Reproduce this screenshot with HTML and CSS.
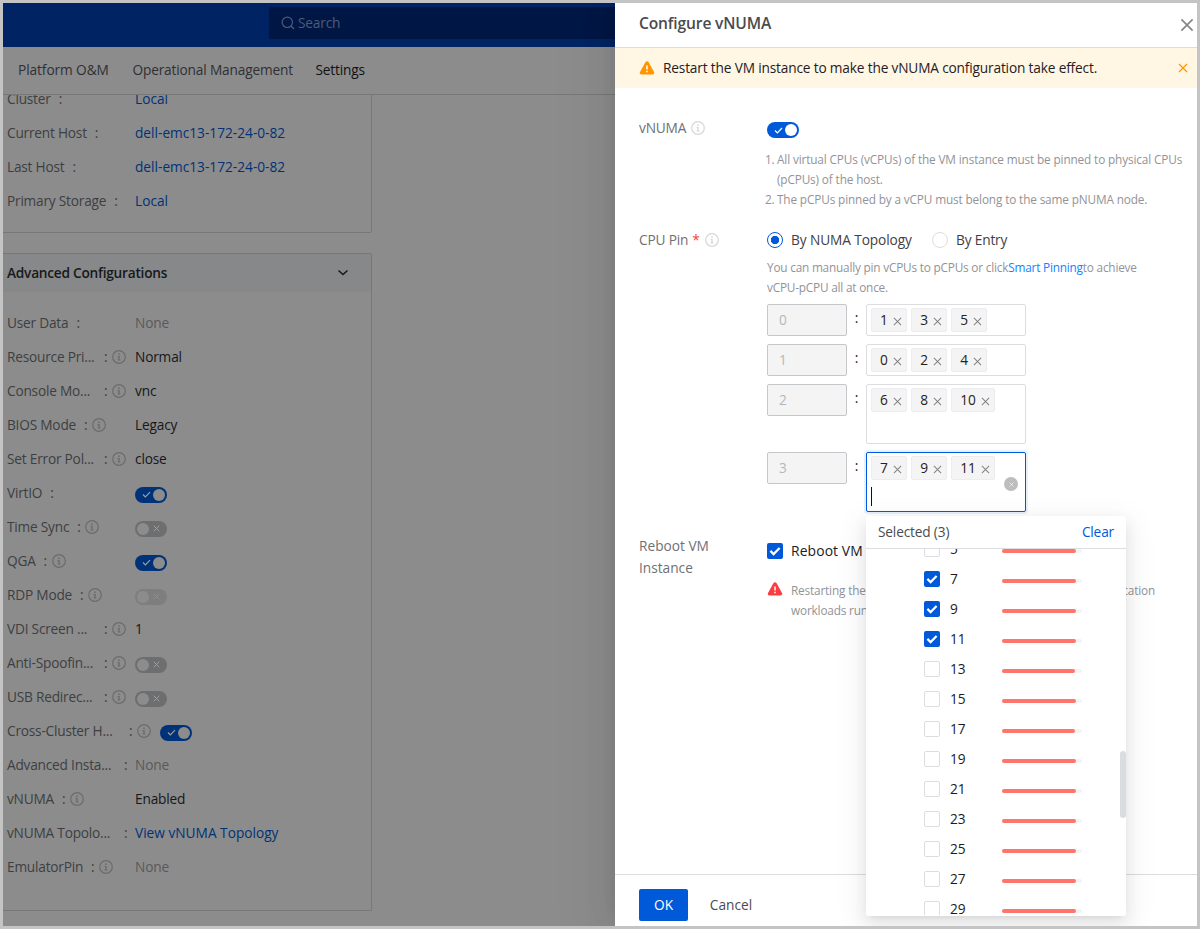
FILE: index.html
```html
<!DOCTYPE html>
<html lang="en">
<head>
<meta charset="utf-8">
<title>Configure vNUMA</title>
<link rel="stylesheet" href="styles.css">
</head>
<body>
<svg width="0" height="0" class="defs">
  <symbol id="info" viewBox="0 0 14 14"><circle cx="7" cy="7" r="6.3" fill="none" stroke="currentColor" stroke-width="1.2"/><path d="M6.2 3.500h1.600v1.500H6.200zM5.500 6h2.200v3.500h.8v1h-3v-1h.8V7h-.8z" fill="currentColor"/></symbol>
  <symbol id="tick" viewBox="0 0 16 16"><path d="M3.400 7.900l3.200 3.200 6-6.200" fill="none" stroke="#fff" stroke-width="2.200"/></symbol>
  <symbol id="cross" viewBox="0 0 10 10"><path d="M1 1l8 8M9 1l-8 8" fill="none" stroke="currentColor" stroke-width="1.200"/></symbol>
  <symbol id="warn" viewBox="0 0 16 14"><path d="M6.500 1.100Q8-.7 9.500 1.100L15 11Q15.900 13.400 13.400 13.600H2.600Q.1 13.400 1 11z" fill="currentColor"/><path d="M8 4.400v4.200M8 9.700v1.600" stroke="#fff" stroke-width="1.500"/></symbol>
</svg>
<div class="frame">
  <main class="page">
    <header class="topbar"><div class="search"><svg class="search-ic" viewBox="0 0 14 14"><circle cx="6.300" cy="6.300" r="5.200" fill="none" stroke="currentColor" stroke-width="1.200"/><path d="M10 10l3 3" stroke="currentColor" stroke-width="1.300"/></svg>Search</div></header>
    <nav class="nav"><span class="n1">Platform O&amp;M</span><span class="n2">Operational Management</span><span class="n3">Settings</span></nav>
    <div class="content">
      <section class="card card-top">
        <div class="row"><span class="lab">Cluster</span><i>:</i><span class="val link">Local</span></div>
        <div class="row"><span class="lab">Current Host</span><i>:</i><span class="val link">dell-emc13-172-24-0-82</span></div>
        <div class="row"><span class="lab">Last Host</span><i>:</i><span class="val link">dell-emc13-172-24-0-82</span></div>
        <div class="row"><span class="lab">Primary Storage</span><i>:</i><span class="val link">Local</span></div>
      </section>
      <section class="card card-adv">
        <h2 class="card-h">Advanced Configurations<svg class="chev" viewBox="0 0 12 8"><path d="M1.500 1.500L6 5.600l4.500-4.100" fill="none" stroke="currentColor" stroke-width="1.500"/></svg></h2>
        <div class="rows" id="rows"></div>
      </section>
    </div>
  </main>
  <aside class="drawer">
    <header class="d-head">Configure vNUMA<svg class="close"><use href="#cross"/></svg></header>
    <div class="banner"><svg class="warn"><use href="#warn"/></svg><span>Restart the VM instance to make the vNUMA configuration take effect.</span><svg class="b-close"><use href="#cross"/></svg></div>
    <div class="form">
      <div class="field f-numa">
        <div class="f-lab">vNUMA<svg class="info"><use href="#info"/></svg></div>
        <div class="f-body">
          <span class="sw on live"><svg class="sw-ic" viewBox="0 0 10 8"><path d="M1 4l2.700 2.700L9 1.200" fill="none" stroke="currentColor" stroke-width="1.400"/></svg></span>
          <ol class="notes"><li><b>1.</b><span>All virtual CPUs (vCPUs) of the VM instance must be pinned to physical CPUs<br>(pCPUs) of the host.</span></li><li><b>2.</b><span>The pCPUs pinned by a vCPU must belong to the same pNUMA node.</span></li></ol>
        </div>
      </div>
      <div class="field f-pin">
        <div class="f-lab">CPU Pin<em>*</em><svg class="info"><use href="#info"/></svg></div>
        <div class="f-body">
          <div class="radios"><span class="radio sel"></span><span class="r1">By NUMA Topology</span><span class="radio"></span><span>By Entry</span></div>
          <p class="help">You can manually pin vCPUs to pCPUs or click<a>Smart Pinning</a>to achieve<br>vCPU-pCPU all at once.</p>
          <div class="pins" id="pins"></div>
        </div>
      </div>
      <div class="field f-reboot">
        <div class="f-lab">Reboot VM<br>Instance</div>
        <div class="f-body">
          <div class="rb"><span class="cb on"><svg><use href="#tick"/></svg></span>Reboot VM Instance</div>
          <div class="rb-note"><svg class="danger"><use href="#warn"/></svg><div><p class="spread"><span>Restarting the</span><span>VM instance may interrupt the application</span></p><p>workloads running on it.</p></div></div>
        </div>
      </div>
    </div>
    <footer class="d-foot"><button class="ok">OK</button><button class="cancel">Cancel</button></footer>
    <div class="dropdown">
      <div class="dd-head"><span>Selected (3)</span><a>Clear</a></div>
      <div class="dd-list" id="opts"></div>
      <span class="thumb"></span>
    </div>
  </aside>
</div>
<script src="app.js"></script>
</body>
</html>
```
FILE: styles.css
```css
* { box-sizing: border-box; }
body { margin: 0; width: 1200px; height: 929px; overflow: hidden; font-family: "Open Sans", "Noto Sans", sans-serif; font-size: 13.700px; letter-spacing: -.17px; line-height: 20px; color: #222; }
p, ol, h2 { margin: 0; padding: 0; }
svg { display: block; flex: none; }
.defs { position: absolute; }
.frame { width: 1200px; height: 929px; border: 3px solid #c4c4c4; display: flex; overflow: hidden; background: #8c8c8c; }
.page { width: 612px; flex: none; height: 923px; display: flex; flex-direction: column; }
.topbar { height: 44px; flex: none; background: #002463; padding: 4px 0 0 266px; }
.search { height: 32px; background: #001745; border-radius: 2px 0 0 2px; display: flex; align-items: center; padding-left: 12px; gap: 3px; color: #4d5b7a; }
.search-ic { width: 14px; height: 14px; }
.nav { height: 48px; flex: none; border-bottom: 1px solid #777; display: flex; align-items: center; padding: 0 0 2px 15px; color: #2f3033; }
.n1 { width: 114.500px; letter-spacing: -.08px; }
.n2 { width: 183px; }
.n3 { color: #111; }
.content { flex: 1; overflow: hidden; }
.card { width: 369px; border: 1px solid #777; border-left: 0; border-radius: 0 2px 2px 0; }
.card-top { margin-top: -14px; height: 152px; }
.card-adv { margin-top: 20px; height: 658px; }
.card-h { height: 38px; background: #86888a; display: flex; align-items: center; justify-content: space-between; padding: 0 22px 0 4px; font-size: 13.700px; font-weight: 600; letter-spacing: -.25px; color: #17181a; }
.chev { width: 12px; height: 8px; }
.rows { padding-top: 14px; }
.row { height: 34px; display: flex; align-items: center; padding-left: 4px; position: relative; color: #3d3f42; white-space: nowrap; }
.row i { font-style: normal; width: 4px; margin: 0 4px 0 8px; }
.lab { letter-spacing: -.22px; }
.row .info { width: 14px; height: 14px; color: #6c6c6e; }
.cut { width: 89px; }
.cut-l { width: 109px; }
.cut-x { width: 114px; }
.val { position: absolute; left: 132px; color: #16171a; }
.val-x { left: 157px; }
.val.link { color: #003277; letter-spacing: 0; }
.val.none { color: #58595b; }
.sw { display: flex; align-items: center; width: 32px; height: 16px; border-radius: 8px; background: #6d6e70; color: #a0a0a0; padding: 0 2px; flex-direction: row-reverse; justify-content: space-between; }
.sw::after { content: ""; width: 12px; height: 12px; border-radius: 50%; background: #8c8c8c; }
.sw.on { background: #00327a; flex-direction: row; }
.sw-ic { width: 9px; height: 7px; margin-left: 5px; }
.sw.off .sw-ic { width: 7px; margin: 0 5px 0 0; }
.sw.dis { background: #7e7e7e; color: #8e8e8e; }
.row .sw { margin-top: 3px; }
.sw.live { background: #0059d8; color: #fff; }
.sw.live::after { background: #fff; }

.drawer { position: relative; width: 582px; flex: none; height: 923px; background: #fff; display: flex; flex-direction: column; box-shadow: -6px 0 16px -8px rgba(0,0,0,.08), -9px 0 28px rgba(0,0,0,.05), -12px 0 48px 16px rgba(0,0,0,.03); }
.d-head { height: 45px; flex: none; border-bottom: 1px solid #dcdde0; display: flex; align-items: center; justify-content: space-between; padding: 0 3px 4px 24px; font-size: 15.600px; font-weight: 600; letter-spacing: -.15px; color: #4a4b50; }
.close { width: 14px; height: 14px; color: #85868a; margin-top: 4px; }
.banner { height: 40px; flex: none; background: #fff7e3; display: flex; align-items: center; padding: 0 9px 0 24px; color: #1f2023; }
.warn { width: 16px; height: 14px; color: #ff9500; margin-right: 8px; }
.b-close { width: 10px; height: 10px; color: #ff9500; margin-left: auto; }
.form { flex: 1; padding: 30px 0 0 24px; }
.field { display: flex; }
.f-lab { width: 128px; flex: none; display: flex; align-items: center; height: 20px; color: #6f7075; }
.f-lab .info { width: 14px; height: 14px; color: #d6d7db; margin-left: 5px; }
.f-lab em { color: #f5413d; font-style: normal; margin-left: 4px; }
.f-numa { height: 112px; }
.f-numa .sw { margin-top: 4px; }
.notes { list-style: none; margin: 11px 0 0 -2px; font-size: 11.800px; letter-spacing: -.14px; color: #929397; }
.notes li { display: flex; white-space: nowrap; }
.notes b { width: 12px; font-weight: 400; }
.radios { display: flex; align-items: center; height: 20px; color: #3f4045; }
.radio { width: 16px; height: 16px; border: 1px solid #dcdde0; border-radius: 50%; margin-right: 8px; }
.radio.sel { border-color: #0059d8; background: radial-gradient(circle, #0059d8 3.800px, #fff 4.500px); }
.r1 { width: 141px; letter-spacing: -.1px; }
.help { margin-top: 7px; font-size: 11.800px; letter-spacing: -.2px; color: #929397; white-space: nowrap; }
.help a { color: #1482ff; }
.pins { margin-top: 7px; display: flex; flex-direction: column; gap: 8px; }
.pin { display: flex; align-items: flex-start; }
.vcpu { width: 80px; height: 32px; border: 1px solid #c6c7ca; border-radius: 2px; background: #f4f4f4; color: #b6b7ba; padding: 5px 11px; }
.sep { width: 19px; text-align: center; line-height: 28px; color: #222; }
.tags { position: relative; width: 160px; height: 32px; border: 1px solid #dcdde0; border-radius: 2px; padding: 3px 4px; display: flex; align-items: flex-start; gap: 4px; background: #fff; }
.tags.tall { height: 60px; }
.tags.focus { border-color: #0059d8; box-shadow: 0 0 0 2px rgba(0,125,250,.1); }
.tag { height: 24px; background: #f4f4f4; border: 1px solid #ededef; border-radius: 2px; display: flex; align-items: center; padding: 0 4.500px 0 8px; gap: 5px; }
.tag svg { width: 9px; height: 9px; color: #85868a; margin-top: 2px; }
.caret { position: absolute; left: 4px; top: 34px; width: 1px; height: 19px; background: #111; }
.clr { position: absolute; right: 7px; top: 24px; width: 14px; height: 14px; border-radius: 50%; background: #bdbdbd; color: #fff; display: grid; place-items: center; }
.clr svg { width: 5px; height: 5px; stroke: #fff; }
.clr use { stroke: #fff; }
.f-reboot { margin-top: 24px; }
.f-reboot .f-lab { display: block; line-height: 22px; height: 44px; margin-top: -1px; letter-spacing: 0; }
.rb { display: flex; align-items: center; gap: 8px; margin-top: 5px; color: #1b1c1f; white-space: nowrap; font-size: 13.900px; letter-spacing: .1px; }
.cb { width: 16px; height: 16px; flex: none; border: 1px solid #dcdde0; border-radius: 2px; background: #fff; }
.cb.on { background: #0059d8; border: 0; }
.cb svg { width: 16px; height: 16px; }
.rb-note { display: flex; gap: 8px; margin-top: 19px; font-size: 11.800px; letter-spacing: -.17px; color: #929397; }
.danger { width: 16px; height: 14px; color: #fa3d43; margin-top: 2px; }
.spread { width: 364px; display: flex; justify-content: space-between; white-space: nowrap; }
.d-foot { height: 52px; flex: none; border-top: 1px solid #dcdde0; padding: 14px 24px; display: flex; gap: 11px; }
.d-foot button { font: inherit; height: 32px; border: 0; border-radius: 2px; background: none; padding: 0; color: #4a4b50; }
.d-foot .ok { width: 49px; background: #0059d8; color: #fff; }
.d-foot .cancel { width: 64px; }
.dropdown { position: absolute; left: 251px; top: 513px; width: 260px; height: 400px; background: #fff; border-radius: 2px; display: flex; flex-direction: column; box-shadow: 0 3px 6px -4px rgba(0,0,0,.12), 0 6px 16px rgba(0,0,0,.08), 0 9px 28px 8px rgba(0,0,0,.05); }
.dd-head { height: 33px; flex: none; border-bottom: 1px solid #dcdde0; display: flex; justify-content: space-between; align-items: center; padding: 0 12px; color: #4a4b50; }
.dd-head a { color: #0059d8; }
.dd-list { height: 366px; overflow: hidden; }
.opt { height: 30px; display: flex; align-items: center; padding-left: 58px; color: #1b1c1f; }
.opt:first-child { margin-top: -15px; }
.num { flex: none; width: 52px; padding-left: 10px; margin-right: 10px; }
.bar { width: 80px; height: 4px; margin-top: 4px; border-radius: 2px; background: #f4f4f5; }
.fill { display: block; height: 4px; width: 74px; border-radius: 2px; background: #ff746b; }
.fill.short { width: 73px; }
.thumb { position: absolute; right: 0; top: 235px; width: 6px; height: 67px; border-radius: 3px; background: #dbdce0; }
```
FILE: app.js
```js
const use = (id, cls) => `<svg class="${cls || ''}"><use href="#${id}"/></svg>`;
const check = '<svg class="sw-ic" viewBox="0 0 10 8"><path d="M1 4l2.7 2.7L9 1.2" fill="none" stroke="currentColor" stroke-width="1.3"/></svg>';
const off = '<svg class="sw-ic" viewBox="0 0 10 10"><path d="M1 1l8 8M9 1L1 9" fill="none" stroke="currentColor" stroke-width="1.4"/></svg>';
const sw = { on: `<span class="sw on">${check}</span>`, off: `<span class="sw off">${off}</span>`, dis: `<span class="sw off dis">${off}</span>` };
// label, value, has info icon, label class, value class
const rows = [
  ['User Data', 'None', 0, '', 'none'],
  ['Resource Pri...', 'Normal', 1, 'cut', ''],
  ['Console Mo...', 'vnc', 1, 'cut', ''],
  ['BIOS Mode', 'Legacy', 1, '', ''],
  ['Set Error Pol...', 'close', 1, 'cut', ''],
  ['VirtIO', sw.on, 0, '', ''],
  ['Time Sync', sw.off, 1, '', ''],
  ['QGA', sw.on, 1, '', ''],
  ['RDP Mode', sw.dis, 1, '', ''],
  ['VDI Screen ...', '1', 1, 'cut', ''],
  ['Anti-Spoofin...', sw.off, 1, 'cut', ''],
  ['USB Redirec...', sw.off, 1, 'cut', ''],
  ['Cross-Cluster H...', sw.on, 1, 'cut-x', 'val-x'],
  ['Advanced Insta...', 'None', 0, 'cut-l', 'none'],
  ['vNUMA', 'Enabled', 1, '', ''],
  ['vNUMA Topolo...', 'View vNUMA Topology', 0, 'cut-l', 'link'],
  ['EmulatorPin', 'None', 1, '', 'none'],
];
document.getElementById('rows').innerHTML = rows.map(([l, v, i, lc, vc]) =>
  `<div class="row"><span class="lab ${lc}">${l}</span><i>:</i>${i ? use('info', 'info') : ''}<span class="val ${vc}">${v}</span></div>`).join('');

const pins = [[1, 3, 5], [0, 2, 4], [6, 8, 10], [7, 9, 11]];
document.getElementById('pins').innerHTML = pins.map((p, n) =>
  `<div class="pin"><div class="vcpu">${n}</div><span class="sep">:</span><div class="tags ${n > 1 ? 'tall' : ''} ${n === 3 ? 'focus' : ''}">` +
  p.map(t => `<span class="tag">${t}${use('cross')}</span>`).join('') +
  (n === 3 ? `<span class="caret"></span><span class="clr">${use('cross')}</span>` : '') + '</div></div>').join('');

let html = '';
for (let n = 5; n <= 29; n += 2) {
  const on = n >= 7 && n <= 11;
  html += `<div class="opt"><span class="cb ${on ? 'on' : ''}">${on ? use('tick') : ''}</span><span class="num">${n}</span><span class="bar"><span class="fill ${n === 13 || n === 17 ? 'short' : ''}"></span></span></div>`;
}
document.getElementById('opts').innerHTML = html;
```
